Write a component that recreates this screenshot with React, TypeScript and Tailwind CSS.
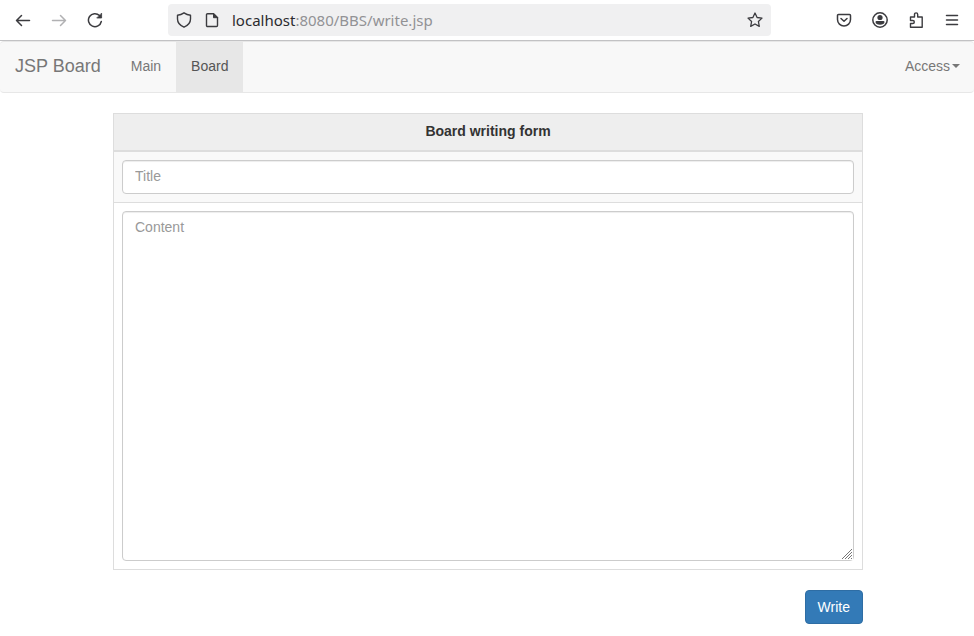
import { useState } from "react";
import type { ReactNode } from "react";

function Icon({ children }: { children: ReactNode }) {
  return (
    <svg
      viewBox="0 0 16 16"
      className="size-4 shrink-0"
      fill="none"
      stroke="currentColor"
      strokeWidth="1.5"
      strokeLinecap="round"
      strokeLinejoin="round"
      aria-hidden="true"
    >
      {children}
    </svg>
  );
}

function BrowserToolbar() {
  return (
    <header className="flex items-center justify-between gap-16 border-b border-[#c2c2c4] bg-white py-1 pr-3.5 pl-[15px] text-[#3b3b3f]">
      <div className="flex items-center gap-5">
        <button aria-label="Back">
          <Icon>
            <path d="M14.5 8.500H1.500M6.500 3.500l-5 5 5 5" />
          </Icon>
        </button>
        <button aria-label="Forward" disabled className="text-[#b1b1b3]">
          <Icon>
            <path d="M1.500 8.500h13M9.500 3.500l5 5-5 5" />
          </Icon>
        </button>
        <button aria-label="Reload">
          <Icon>
            <path d="M14.300 9.500A6.500 6.500 0 1 1 12.500 3.500" />
            <path d="M14.600 1.500v4.500h-4.500z" fill="currentColor" strokeWidth="0.8" />
          </Icon>
        </button>
      </div>

      <div className="flex h-8 max-w-[603px] flex-1 items-center gap-3 rounded bg-[#f0f0f1] px-2">
        <button aria-label="Tracking protection">
          <Icon>
            <path d="M8 .8Q11 2.800 14.500 3.200v3.800c0 3.800-2.500 6.500-6.500 8.200-4-1.700-6.500-4.400-6.500-8.200V3.200Q5 2.800 8 .8z" strokeWidth="1.400" />
          </Icon>
        </button>
        <button aria-label="Site information">
          <Icon>
            <path d="M3.500 1.700h6l4 4v7.800a1 1 0 0 1-1 1h-9a1 1 0 0 1-1-1V2.700a1 1 0 0 1 1-1z" strokeWidth="1.400" />
            <path d="M9.500 1.700v4h4z" fill="currentColor" strokeWidth="1" />
          </Icon>
        </button>
        <div
          role="textbox"
          aria-label="Address"
          tabIndex={0}
          className="flex-1 font-['Noto_Sans',sans-serif] text-[15px] leading-5 text-[#929295]"
        >
          <span className="text-[#2b2b2f]">localhost</span>:8080/BBS/write.jsp
        </div>
        <button aria-label="Bookmark this page">
          <Icon>
            <path d="m8 1 2.100 4.500 4.900.6-3.600 3.400.9 4.900L8 12l-4.300 2.400.9-4.900L1 6.100l4.900-.6z" strokeWidth="1.300" />
          </Icon>
        </button>
      </div>

      <div className="flex items-center gap-5">
        <button aria-label="Save to Pocket">
          <Icon>
            <path d="M2.500 2.500h11a1 1 0 0 1 1 1v4a6.500 6.500 0 0 1-13 0v-4a1 1 0 0 1 1-1zM5 6.500l3 2.800 3-2.800" />
          </Icon>
        </button>
        <button aria-label="Account">
          <Icon>
            <circle cx="8" cy="8" r="7.200" />
            <circle cx="8" cy="5.500" r="2.600" fill="currentColor" stroke="none" />
            <path d="M4.500 9h7a1 1 0 0 1 1 1c0 1.800-1.800 2.800-4.500 2.800S3.500 11.800 3.500 10a1 1 0 0 1 1-1z" fill="currentColor" stroke="none" />
          </Icon>
        </button>
        <button aria-label="Extensions">
          <Icon>
            <path d="M2.500 15.200v-3.700h2.300a1.500 1.500 0 0 0 0-3H2.500V5h4V2.500a1.600 1.600 0 0 1 3.200 0V5h4.500v10.200z" strokeWidth="1.400" />
          </Icon>
        </button>
        <button aria-label="Open application menu">
          <Icon>
            <path d="M2.500 3.500h11M2.500 8h11M2.500 12.500h11" />
          </Icon>
        </button>
      </div>
    </header>
  );
}

function Navbar() {
  const [open, setOpen] = useState(false);

  return (
    <nav className="flex justify-between rounded border-y border-[#e7e7e7] bg-[#f8f8f8] text-[#777]">
      <div className="flex items-stretch">
        <a href="#" className="px-[15px] pt-3.5 pb-4 text-lg leading-5">JSP Board</a>
        <a href="#main" className="px-[15px] pt-3.5 pb-4">Main</a>
        <a href="#board" aria-current="page" className="bg-[#e7e7e7] px-[15px] pt-3.5 pb-4 text-[#555]">Board</a>
      </div>
      <div className="relative">
        <button
          onClick={() => setOpen((o) => !o)}
          aria-expanded={open}
          className="flex items-center px-3.5 pt-3.5 pb-4"
        >
          Access
          <span className="ml-0.5 border-x-4 border-t-4 border-x-transparent border-t-current" />
        </button>
        {open && (
          <div className="absolute right-0 z-10 w-40 rounded-b border border-[#ccc] bg-white py-1.5 text-[#333] shadow-lg">
            <a href="#login" className="block px-5 py-1">Login</a>
            <a href="#join" className="block px-5 py-1">Join</a>
          </div>
        )}
      </div>
    </nav>
  );
}

const fieldClass =
  "block w-full rounded border border-[#ccc] bg-white px-3 pt-[5px] pb-[7px] text-[#555] shadow-[inset_0_1px_1px_rgba(0,0,0,0.075)] outline-none placeholder:text-[#999] focus:border-[#66afe9]";

export default function App() {
  return (
    <div className="min-h-screen bg-white font-['Liberation_Sans',Arial,sans-serif] text-sm leading-5 text-[#333]">
      <BrowserToolbar />
      <Navbar />

      <main className="mx-auto max-w-[752px] pt-5 pl-0.5">
        <form onSubmit={(e) => e.preventDefault()}>
          <table className="mb-5 w-full border-collapse border border-[#ddd]">
            <thead>
              <tr>
                <th className="border-b-2 border-[#ddd] bg-[#eee] px-2 pt-[7px] pb-[9px] text-center font-bold">Board writing form</th>
              </tr>
            </thead>
            <tbody>
              <tr className="bg-[#f9f9f9]">
                <td className="border-t border-[#ddd] p-2">
                  <input
                    type="text"
                    name="title"
                    aria-label="Title"
                    placeholder="Title"
                    maxLength={50}
                    className={`h-[34px] ${fieldClass}`}
                  />
                </td>
              </tr>
              <tr>
                <td className="border-t border-[#ddd] p-2">
                  <div className="relative">
                    <textarea
                      name="content"
                      aria-label="Content"
                      placeholder="Content"
                      maxLength={2048}
                      className={`h-[350px] resize-y ${fieldClass}`}
                    />
                    {/* Resize grip */}
                    <svg
                      viewBox="0 0 12 12"
                      className="pointer-events-none absolute right-px bottom-px size-3 bg-white"
                      fill="none"
                      stroke="#777"
                      aria-hidden="true"
                    >
                      <path d="M1 11 11 1M4 11l7-7M7 11l4-4M10 11l1-1" />
                    </svg>
                  </div>
                </td>
              </tr>
            </tbody>
          </table>
          <div className="flex justify-end">
            <button type="submit" className="rounded border border-[#2e6da4] bg-[#337ab7] px-3 py-1.5 text-white">
              Write
            </button>
          </div>
        </form>
      </main>
    </div>
  );
}
